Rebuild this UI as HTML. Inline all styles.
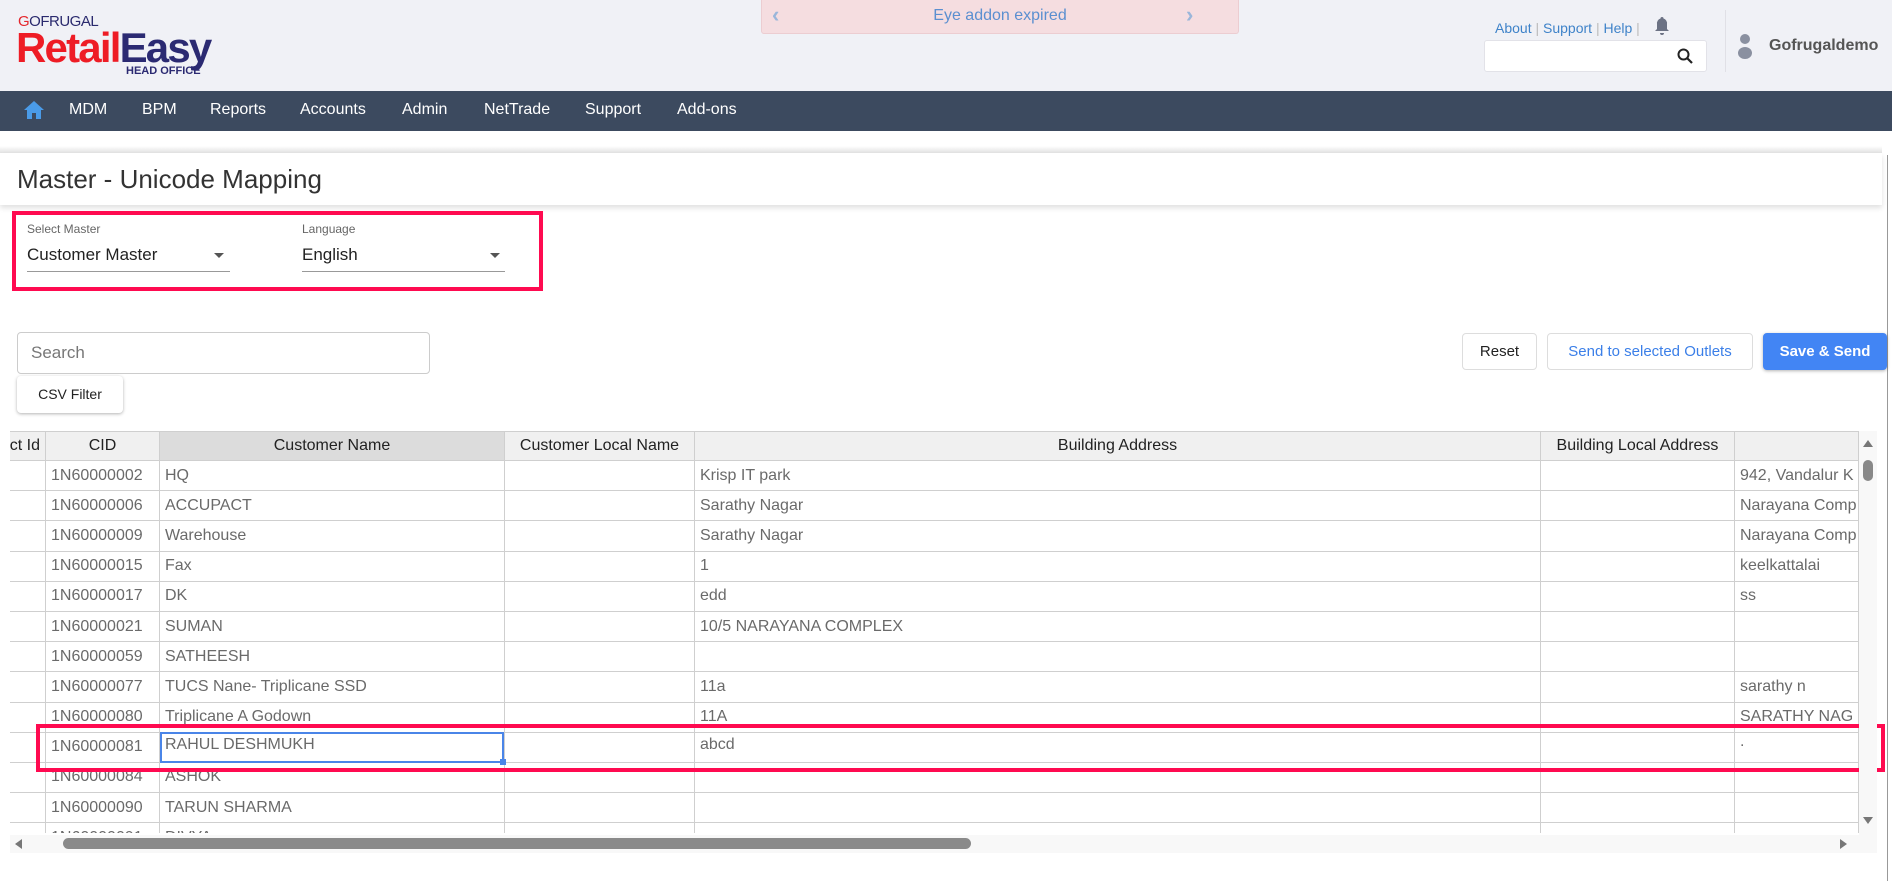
<!DOCTYPE html>
<html><head><meta charset="utf-8"><style>
*{box-sizing:border-box;margin:0;padding:0}
body{width:1892px;height:881px;overflow:hidden;background:#fff;font-family:"Liberation Sans",sans-serif;position:relative}
.a{position:absolute}
.hdr{left:0;top:0;width:1892px;height:91px;background:#f0f1f6}
.nav{left:0;top:91px;width:1892px;height:40px;background:#3c4a5f}
.nav span{position:absolute;top:10px;color:#fff;font-size:16px}
table{border-collapse:collapse;table-layout:fixed;font-size:16px}
td,th{border:1px solid #cfcfcf;height:30.2px;padding:0 5px;white-space:nowrap;overflow:hidden;color:#6a6a6a;font-weight:normal;text-align:left}
th{background:#f0f0f0;color:#222;text-align:center;height:29px}
.btn{border:1px solid #ddd;border-radius:4px;background:#fff;font-size:15px;text-align:center;line-height:36px}
</style></head><body>
<div class="a hdr"></div>
<div class="a" style="left:18px;top:13px;font-size:15px;color:#2a2a6e;letter-spacing:-0.5px"><span style="color:#e4262c">G</span>OFRUGAL</div>
<div class="a" style="left:16px;top:24px;font-size:42px;font-weight:bold;letter-spacing:-1.8px;color:#ee1c25">Retail<span style="color:#2b2a72">Easy</span></div>
<div class="a" style="left:126px;top:65px;font-size:11px;font-weight:bold;color:#2b2a72">HEAD OFFICE</div>
<div class="a" style="left:761px;top:0;width:478px;height:34px;background:#f5dde0;border:1px solid #eccdd1;border-top:none;border-radius:0 0 3px 3px;color:#5b8fd0;font-size:16px;text-align:center;line-height:32px">Eye addon expired</div>
<div class="a" style="left:772px;top:2px;color:#9ab6da;font-size:22px;font-weight:bold">‹</div>
<div class="a" style="left:1186px;top:2px;color:#9ab6da;font-size:22px;font-weight:bold">›</div>
<div class="a" style="left:1495px;top:20px;font-size:14px;color:#3f83c9">About <span style="color:#bbb">|</span> Support <span style="color:#bbb">|</span> Help <span style="color:#bbb">|</span></div>
<svg class="a" style="left:1654px;top:16px" width="16" height="20" viewBox="0 0 16 20"><path d="M8 1a1.5 1.5 0 0 1 1.5 1.5A5 5 0 0 1 13 8v5l2 2H1l2-2V8a5 5 0 0 1 3.5-5.5A1.5 1.5 0 0 1 8 1zM6 17h4a2 2 0 0 1-4 0z" fill="#6c7284"/></svg>
<div class="a" style="left:1484px;top:40px;width:223px;height:32px;background:#fff;border:1px solid #e2e2e8;border-radius:3px"></div>
<svg class="a" style="left:1676px;top:47px" width="18" height="18" viewBox="0 0 18 18"><circle cx="7.5" cy="7.5" r="5" stroke="#222" stroke-width="2" fill="none"/><path d="M11 11l5 5" stroke="#222" stroke-width="2.2"/></svg>
<div class="a" style="left:1725px;top:10px;width:1px;height:62px;background:#e0e0e6"></div>
<svg class="a" style="left:1735px;top:32px" width="20" height="28" viewBox="0 0 20 28"><circle cx="10" cy="7" r="5" fill="#8a90a0"/><ellipse cx="10" cy="21" rx="7" ry="6" fill="#8a90a0"/></svg>
<div class="a" style="left:1769px;top:37px;font-size:16px;font-weight:bold;color:#555">Gofrugaldemo</div>
<div class="a nav">
<svg style="position:absolute;left:23px;top:8px" width="22" height="22" viewBox="0 0 22 22"><path d="M11 2L1 11h3v9h5v-6h4v6h5v-9h3z" fill="#4a9be8"/></svg>
<span style="left:69px">MDM</span><span style="left:142px">BPM</span><span style="left:210px">Reports</span><span style="left:300px">Accounts</span><span style="left:402px">Admin</span><span style="left:484px">NetTrade</span><span style="left:585px">Support</span><span style="left:677px">Add-ons</span></div>
<div class="a" style="left:0;top:146px;width:1882px;height:7px;background:linear-gradient(#fff,#e2e2e2)"></div>
<div class="a" style="left:0;top:153px;width:1882px;height:52px;background:#fff;box-shadow:0 3px 5px rgba(0,0,0,.12)"></div>
<div class="a" style="left:1887px;top:155px;width:1px;height:726px;background:#999"></div>
<div class="a" style="left:17px;top:164px;font-size:26px;color:#333">Master - Unicode Mapping</div>
<div class="a" style="left:12px;top:211px;width:531px;height:80px;border:4px solid #ff0a50"></div>
<div class="a" style="left:27px;top:222px;font-size:12px;color:#666">Select Master</div>
<div class="a" style="left:27px;top:245px;font-size:17px;color:#222">Customer Master</div>
<div class="a" style="left:27px;top:271px;width:203px;height:1px;background:#999"></div>
<div class="a" style="left:214px;top:253px;border:5px solid transparent;border-top-color:#555"></div>
<div class="a" style="left:302px;top:222px;font-size:12px;color:#666">Language</div>
<div class="a" style="left:302px;top:245px;font-size:17px;color:#222">English</div>
<div class="a" style="left:302px;top:271px;width:203px;height:1px;background:#999"></div>
<div class="a" style="left:490px;top:253px;border:5px solid transparent;border-top-color:#555"></div>
<div class="a" style="left:17px;top:332px;width:413px;height:42px;border:1px solid #ccc;border-radius:4px;font-size:17px;color:#777;padding:10px 13px">Search</div>
<div class="a btn" style="left:17px;top:376px;width:106px;height:37px;font-size:14px;color:#222;border:none;box-shadow:0 1px 3px rgba(0,0,0,.3)">CSV Filter</div>
<div class="a btn" style="left:1462px;top:333px;width:75px;height:37px;color:#222">Reset</div>
<div class="a btn" style="left:1547px;top:333px;width:206px;height:37px;color:#3b7fe8">Send to selected Outlets</div>
<div class="a btn" style="left:1763px;top:333px;width:124px;height:37px;background:#4285f4;border-color:#4285f4;color:#fff;font-weight:bold;box-shadow:0 1px 3px rgba(0,0,0,.3)">Save &amp; Send</div>
<div class="a" style="left:10px;top:431px;width:1849px;height:402px;overflow:hidden">
<table style="width:1860px;margin-left:-12px">
<colgroup><col style="width:47px"><col style="width:114px"><col style="width:345px"><col style="width:190px"><col style="width:846px"><col style="width:194px"><col style="width:124px"></colgroup>
<tr><th style="text-align:right">ct Id</th><th>CID</th><th style="background:#dcdcdc">Customer Name</th><th>Customer Local Name</th><th>Building Address</th><th>Building Local Address</th><th></th></tr>
<tr><td></td><td>1N60000002</td><td>HQ</td><td></td><td>Krisp IT park</td><td></td><td>942, Vandalur K</td></tr>
<tr><td></td><td>1N60000006</td><td>ACCUPACT</td><td></td><td>Sarathy Nagar</td><td></td><td>Narayana Comp</td></tr>
<tr><td></td><td>1N60000009</td><td>Warehouse</td><td></td><td>Sarathy Nagar</td><td></td><td>Narayana Comp</td></tr>
<tr><td></td><td>1N60000015</td><td>Fax</td><td></td><td>1</td><td></td><td>keelkattalai</td></tr>
<tr><td></td><td>1N60000017</td><td>DK</td><td></td><td>edd</td><td></td><td>ss</td></tr>
<tr><td></td><td>1N60000021</td><td>SUMAN</td><td></td><td>10/5 NARAYANA COMPLEX</td><td></td><td></td></tr>
<tr><td></td><td>1N60000059</td><td>SATHEESH</td><td></td><td></td><td></td><td></td></tr>
<tr><td></td><td>1N60000077</td><td>TUCS Nane- Triplicane SSD</td><td></td><td>11a</td><td></td><td>sarathy n</td></tr>
<tr><td></td><td>1N60000080</td><td>Triplicane A Godown</td><td></td><td>11A</td><td></td><td>SARATHY NAG</td></tr>
<tr><td></td><td>1N60000081</td><td style="vertical-align:top;padding-top:3px">RAHUL DESHMUKH</td><td></td><td style="vertical-align:top;padding-top:3px">abcd</td><td></td><td style="vertical-align:top">.</td></tr>
<tr><td></td><td>1N60000084</td><td>ASHOK</td><td></td><td></td><td></td><td></td></tr>
<tr><td></td><td>1N60000090</td><td>TARUN SHARMA</td><td></td><td></td><td></td><td></td></tr>
<tr><td></td><td>1N60000091</td><td>DIVYA</td><td></td><td></td><td></td><td></td></tr>
</table></div>
<div class="a" style="left:160px;top:732px;width:344px;height:31px;border:2px solid #4a85e8"></div>
<div class="a" style="left:500px;top:759px;width:6px;height:6px;background:#4a85e8"></div>
<div class="a" style="left:36px;top:724px;width:1849px;height:48px;border:4px solid #ff0a50"></div>
<div class="a" style="left:1859px;top:431px;width:18px;height:404px;background:#f8f8f8"></div>
<div class="a" style="left:1863px;top:440px;border:5px solid transparent;border-bottom:7px solid #777;border-top:none"></div>
<div class="a" style="left:1863px;top:460px;width:10px;height:21px;background:#888;border-radius:5px"></div>
<div class="a" style="left:1863px;top:817px;border:5px solid transparent;border-top:7px solid #777;border-bottom:none"></div>
<div class="a" style="left:10px;top:835px;width:1867px;height:18px;background:#f8f8f8"></div>
<div class="a" style="left:15px;top:839px;border:5px solid transparent;border-right:7px solid #777;border-left:none"></div>
<div class="a" style="left:63px;top:838px;width:908px;height:11px;background:#8a8a8a;border-radius:6px"></div>
<div class="a" style="left:1840px;top:839px;border:5px solid transparent;border-left:7px solid #777;border-right:none"></div>
</body></html>
